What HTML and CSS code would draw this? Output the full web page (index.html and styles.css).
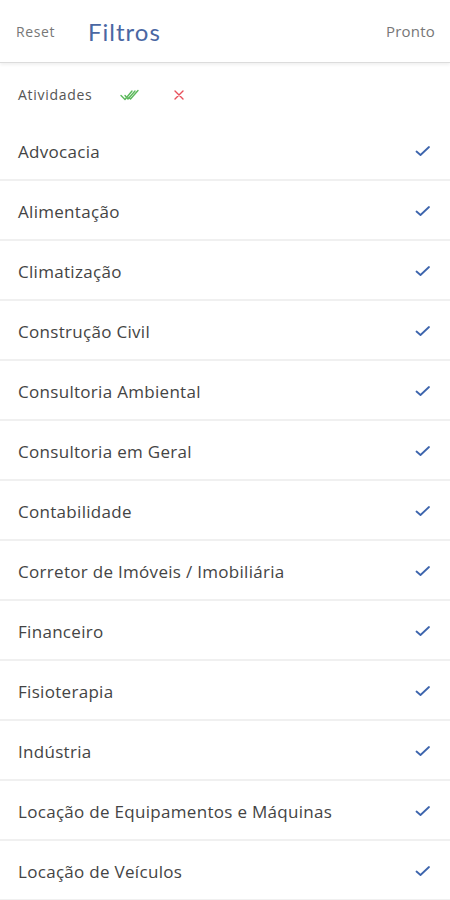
FILE: index.html
```html
<!DOCTYPE html>
<html lang="pt">
<head>
<meta charset="utf-8">
<title>Filtros</title>
<link rel="stylesheet" href="styles.css">
</head>
<body>
<header class="topbar">
  <div class="topbar-left">
    <span class="reset">Reset</span>
    <span class="title">Filtros</span>
  </div>
  <span class="done">Pronto</span>
</header>
<div class="section">
  <span class="section-label">Atividades</span>
  <svg class="icon-all" width="20" height="14" viewBox="0 0 20 14" fill="none" stroke="#5cb85c" stroke-width="1.4" stroke-linecap="round" stroke-linejoin="round">
    <path d="M1 7.5 L5 11.5 L12 3"/>
    <path d="M5 7.5 L8 11 L15 3"/>
    <path d="M9 9.5 L10.5 11 L18 2.5"/>
  </svg>
  <svg class="icon-none" width="12" height="12" viewBox="0 0 12 12" fill="none" stroke="#e8505b" stroke-width="1.4" stroke-linecap="round">
    <path d="M2 2 L10 10 M10 2 L2 10"/>
  </svg>
</div>
<ul class="list">
  <li class="item"><span>Advocacia</span><svg class="check" width="16" height="12" viewBox="0 0 16 12"><path d="M1.5 6.5 L5.5 10 L14 2" fill="none" stroke="#3d65ad" stroke-width="1.8" stroke-linecap="round" stroke-linejoin="round"/></svg></li>
  <li class="item"><span>Alimentação</span><svg class="check" width="16" height="12" viewBox="0 0 16 12"><path d="M1.5 6.5 L5.5 10 L14 2" fill="none" stroke="#3d65ad" stroke-width="1.8" stroke-linecap="round" stroke-linejoin="round"/></svg></li>
  <li class="item"><span>Climatização</span><svg class="check" width="16" height="12" viewBox="0 0 16 12"><path d="M1.5 6.5 L5.5 10 L14 2" fill="none" stroke="#3d65ad" stroke-width="1.8" stroke-linecap="round" stroke-linejoin="round"/></svg></li>
  <li class="item"><span>Construção Civil</span><svg class="check" width="16" height="12" viewBox="0 0 16 12"><path d="M1.5 6.5 L5.5 10 L14 2" fill="none" stroke="#3d65ad" stroke-width="1.8" stroke-linecap="round" stroke-linejoin="round"/></svg></li>
  <li class="item"><span>Consultoria Ambiental</span><svg class="check" width="16" height="12" viewBox="0 0 16 12"><path d="M1.5 6.5 L5.5 10 L14 2" fill="none" stroke="#3d65ad" stroke-width="1.8" stroke-linecap="round" stroke-linejoin="round"/></svg></li>
  <li class="item"><span>Consultoria em Geral</span><svg class="check" width="16" height="12" viewBox="0 0 16 12"><path d="M1.5 6.5 L5.5 10 L14 2" fill="none" stroke="#3d65ad" stroke-width="1.8" stroke-linecap="round" stroke-linejoin="round"/></svg></li>
  <li class="item"><span>Contabilidade</span><svg class="check" width="16" height="12" viewBox="0 0 16 12"><path d="M1.5 6.5 L5.5 10 L14 2" fill="none" stroke="#3d65ad" stroke-width="1.8" stroke-linecap="round" stroke-linejoin="round"/></svg></li>
  <li class="item"><span>Corretor de Imóveis / Imobiliária</span><svg class="check" width="16" height="12" viewBox="0 0 16 12"><path d="M1.5 6.5 L5.5 10 L14 2" fill="none" stroke="#3d65ad" stroke-width="1.8" stroke-linecap="round" stroke-linejoin="round"/></svg></li>
  <li class="item"><span>Financeiro</span><svg class="check" width="16" height="12" viewBox="0 0 16 12"><path d="M1.5 6.5 L5.5 10 L14 2" fill="none" stroke="#3d65ad" stroke-width="1.8" stroke-linecap="round" stroke-linejoin="round"/></svg></li>
  <li class="item"><span>Fisioterapia</span><svg class="check" width="16" height="12" viewBox="0 0 16 12"><path d="M1.5 6.5 L5.5 10 L14 2" fill="none" stroke="#3d65ad" stroke-width="1.8" stroke-linecap="round" stroke-linejoin="round"/></svg></li>
  <li class="item"><span>Indústria</span><svg class="check" width="16" height="12" viewBox="0 0 16 12"><path d="M1.5 6.5 L5.5 10 L14 2" fill="none" stroke="#3d65ad" stroke-width="1.8" stroke-linecap="round" stroke-linejoin="round"/></svg></li>
  <li class="item"><span>Locação de Equipamentos e Máquinas</span><svg class="check" width="16" height="12" viewBox="0 0 16 12"><path d="M1.5 6.5 L5.5 10 L14 2" fill="none" stroke="#3d65ad" stroke-width="1.8" stroke-linecap="round" stroke-linejoin="round"/></svg></li>
  <li class="item"><span>Locação de Veículos</span><svg class="check" width="16" height="12" viewBox="0 0 16 12"><path d="M1.5 6.5 L5.5 10 L14 2" fill="none" stroke="#3d65ad" stroke-width="1.8" stroke-linecap="round" stroke-linejoin="round"/></svg></li>
</ul>
</body>
</html>
```
FILE: styles.css
```css
* { box-sizing: border-box; }
html, body {
  margin: 0;
  padding: 0;
  background: #ffffff;
}
body {
  width: 450px;
  height: 900px;
  overflow: hidden;
  font-family: "Open Sans", "Noto Sans", sans-serif;
  color: #333;
}
.topbar {
  height: 63px;
  display: flex;
  align-items: center;
  justify-content: space-between;
  padding: 0 15px 0 16px;
  border-bottom: 1px solid #dcdcdc;
  box-shadow: 0 2px 3px rgba(0,0,0,0.06);
}
.topbar-left {
  display: flex;
  align-items: center;
  gap: 33px;
}
.reset {
  font-size: 14px;
  letter-spacing: 0.6px;
  color: #777;
}
.title {
  font-family: "Lato", "Open Sans", sans-serif;
  font-size: 24px;
  color: #4a67a3;
  letter-spacing: 1px;
}
.done {
  font-size: 15px;
  letter-spacing: 0.2px;
  color: #777;
}
.section {
  height: 58px;
  display: flex;
  align-items: center;
  padding: 5px 0 0 18px;
}
.section-label {
  font-size: 14px;
  letter-spacing: 0.7px;
  color: #555;
}
.icon-all {
  margin-left: 28px;
}
.icon-none {
  margin-left: 33px;
}
.list {
  list-style: none;
  margin: 0;
  padding: 0;
}
.item {
  height: 60px;
  display: flex;
  align-items: center;
  justify-content: space-between;
  padding: 2px 19px 0 18px;
  border-bottom: 2px solid #f0f0f0;
  font-size: 17px;
  letter-spacing: 0.3px;
  color: #444;
}
.check {
  display: block;
}
```
